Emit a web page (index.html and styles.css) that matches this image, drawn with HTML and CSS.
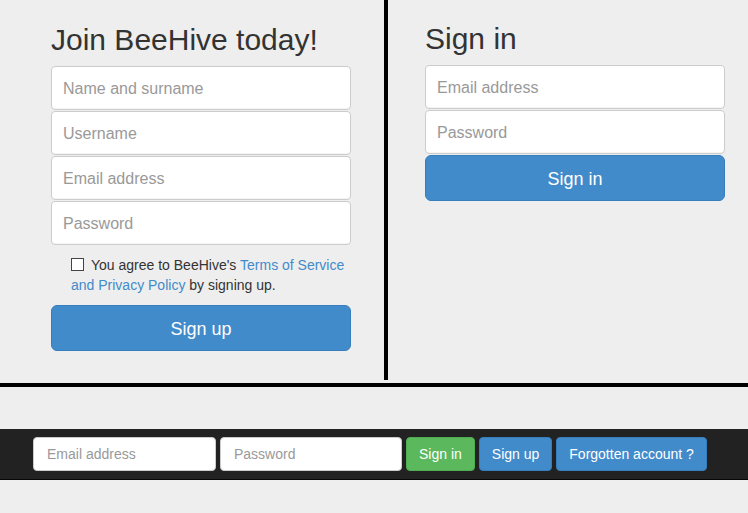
FILE: index.html
```html
<!DOCTYPE html>
<html>
<head>
<meta charset="utf-8">
<link rel="stylesheet" href="styles.css">
</head>
<body>
<div class="top">
  <section class="col col-left">
    <h2 class="title">Join BeeHive today!</h2>
    <form class="form">
      <input class="field" type="text" placeholder="Name and surname">
      <input class="field" type="text" placeholder="Username">
      <input class="field" type="text" placeholder="Email address">
      <input class="field" type="password" placeholder="Password">
      <div class="agree">
        <input class="check" type="checkbox">You agree to BeeHive's <a class="link" href="#">Terms of Service</a><br><a class="link" href="#">and Privacy Policy</a> by signing up.
      </div>
      <button class="btn-lg" type="button">Sign up</button>
    </form>
  </section>
  <section class="col col-right">
    <h2 class="title">Sign in</h2>
    <form class="form">
      <input class="field" type="text" placeholder="Email address">
      <input class="field" type="password" placeholder="Password">
      <button class="btn-lg" type="button">Sign in</button>
    </form>
  </section>
</div>
<div class="divider"></div>
<nav class="navbar">
  <input class="nav-field" type="text" placeholder="Email address">
  <input class="nav-field" type="password" placeholder="Password">
  <button class="btn btn-green" type="button">Sign in</button>
  <button class="btn btn-blue" type="button">Sign up</button>
  <button class="btn btn-blue" type="button">Forgotten account ?</button>
</nav>
</body>
</html>
```
FILE: styles.css
```css
* { box-sizing: border-box; }
html, body {
  margin: 0;
  padding: 0;
  background: #eeeeee;
  font-family: "Liberation Sans", Arial, sans-serif;
  color: #333333;
}
.top {
  display: flex;
  height: 380px;
}
.col-left {
  width: 388px;
  border-right: 4px solid #000;
  padding: 23px 0 0 51px;
}
.col-right {
  flex: 1;
  padding: 22px 0 0 37px;
}
.title {
  margin: 0 0 10px 0;
  font-size: 30px;
  line-height: 33px;
  font-weight: normal;
  color: #333333;
}
.form {
  width: 300px;
  display: flex;
  flex-direction: column;
}
.field {
  display: block;
  width: 300px;
  height: 44px;
  margin: 0 0 1px 0;
  padding: 2px 11px 0 11px;
  font-family: "Liberation Sans", Arial, sans-serif;
  font-size: 16px;
  color: #555;
  background: #fff;
  border: 1px solid #cccccc;
  border-radius: 4px;
  box-shadow: inset 0 -1px 0 rgba(0,0,0,0.04);
  outline: none;
}
.field::placeholder, .nav-field::placeholder { color: #999999; }
.agree {
  margin: 9px 0 10px 20px;
  width: 280px;
  font-size: 14px;
  line-height: 20px;
  color: #333333;
}
.check {
  appearance: none;
  -webkit-appearance: none;
  display: inline-block;
  width: 13px;
  height: 13px;
  margin: 0 7px 0 0;
  border: 1px solid #444;
  background: #fff;
  vertical-align: -1px;
}
.link {
  color: #428bca;
  text-decoration: none;
}
.btn-lg {
  display: block;
  width: 300px;
  height: 46px;
  font-family: "Liberation Sans", Arial, sans-serif;
  font-size: 18px;
  color: #fff;
  background: #428bca;
  border: 1px solid #357ebd;
  border-radius: 6px;
  padding: 2px 0 0 0;
}
.divider {
  height: 4px;
  margin-top: 3px;
  background: #000;
}
.navbar {
  margin-top: 42px;
  background: #222222;
  border-bottom: 1px solid #080808;
  padding: 8px 0 8px 33px;
  display: flex;
  gap: 4px;
  align-items: center;
}
.nav-field {
  width: 183px;
  height: 34px;
  padding: 0 13px;
  font-family: "Liberation Sans", Arial, sans-serif;
  font-size: 14px;
  background: #fff;
  border: 1px solid #cccccc;
  border-radius: 4px;
  outline: none;
}
.nav-field + .nav-field { width: 182px; }
.btn {
  height: 34px;
  padding: 0 12px;
  font-family: "Liberation Sans", Arial, sans-serif;
  font-size: 14px;
  color: #fff;
  border-radius: 4px;
  border: 1px solid transparent;
}
.btn-green { background: #5cb85c; border-color: #4cae4c; }
.btn-blue { background: #428bca; border-color: #357ebd; }
```
